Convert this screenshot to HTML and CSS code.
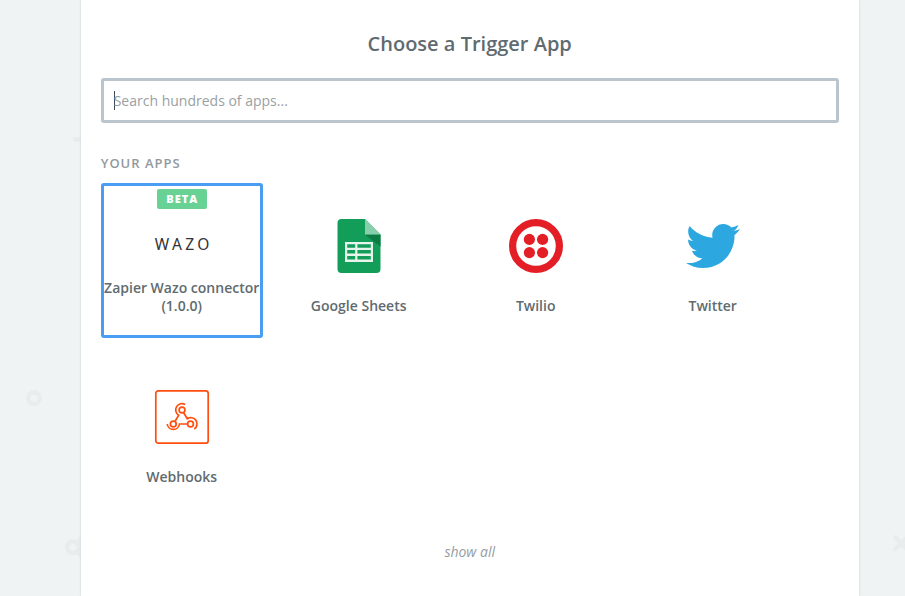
FILE: index.html
```html
<!DOCTYPE html>
<html lang="en">
<head>
<meta charset="utf-8">
<title>Choose a Trigger App</title>
<link rel="stylesheet" href="styles.css">
</head>
<body>
<svg class="backdrop" width="905" height="596" viewBox="0 0 905 596" aria-hidden="true">
  <circle cx="34" cy="398.3" r="5.8"/>
  <circle cx="73" cy="547.3" r="5.8"/>
  <path d="M75.500 139.500H84M77 543L85 535M77 552L85 560M895.500 537.500L910 552M895.500 549L910 534.500"/>
</svg>
<main class="panel">
  <h1 class="title">Choose a Trigger App</h1>
  <div class="search"><span class="caret"></span><input class="search-input" type="text" placeholder="Search hundreds of apps..."></div>
  <h2 class="section">Your Apps</h2>
  <div class="apps">
    <div class="app selected">
      <span class="badge">BETA</span>
      <span class="icon wazo">WAZO</span>
      <span class="name">Zapier Wazo connector (1.0.0)</span>
    </div>
    <div class="app">
      <svg class="icon" viewBox="0 0 54 54">
        <path fill="#129e58" d="M9.500 0H33L48.500 15.500V50a4 4 0 0 1-4 4h-35a4 4 0 0 1-4-4V4a4 4 0 0 1 4-4Z"/>
        <path fill="#0c7a43" d="M33 15.500h15.500V27.500L34 16.500Z"/>
        <path fill="#87ceac" d="M33 0L48.500 15.500H33Z"/>
        <path fill="#e6f4ec" fill-rule="evenodd" d="M13 23h28v20H13ZM15.200 25.200v3.600h8v-3.600ZM25.400 25.200v3.600h13.400v-3.600ZM15.200 31v3.600h8V31ZM25.400 31v3.600h13.400V31ZM15.200 37v3.600h8V37ZM25.400 37v3.600h13.400V37Z"/>
      </svg>
      <span class="name">Google Sheets</span>
    </div>
    <div class="app">
      <svg class="icon" viewBox="0 0 54 54" fill="#e31e26">
        <circle cx="27" cy="27" r="23.400" fill="none" stroke="#e31e26" stroke-width="7.200"/>
        <circle cx="20.400" cy="20.400" r="5.600"/><circle cx="33.600" cy="20.400" r="5.600"/>
        <circle cx="20.400" cy="33.600" r="5.600"/><circle cx="33.600" cy="33.600" r="5.600"/>
      </svg>
      <span class="name">Twilio</span>
    </div>
    <div class="app">
      <svg class="icon" viewBox="0 0 24 24"><path fill="#2ca7e0" d="M23.954 4.569c-.885.389-1.830.654-2.825.775 1.014-.611 1.794-1.574 2.163-2.723-.951.555-2.005.959-3.127 1.184-.896-.959-2.173-1.559-3.591-1.559-2.717 0-4.920 2.203-4.920 4.917 0 .390.045.765.127 1.124C7.691 8.094 4.066 6.130 1.640 3.161c-.427.722-.666 1.561-.666 2.475 0 1.710.870 3.213 2.188 4.096-.807-.026-1.566-.248-2.228-.616v.061c0 2.385 1.693 4.374 3.946 4.827-.413.111-.849.171-1.296.171-.314 0-.615-.030-.916-.086.631 1.953 2.445 3.377 4.604 3.417-1.680 1.319-3.809 2.105-6.102 2.105-.390 0-.779-.023-1.170-.067 2.189 1.394 4.768 2.209 7.557 2.209 9.054 0 13.999-7.496 13.999-13.986 0-.209 0-.420-.015-.630.961-.689 1.800-1.560 2.460-2.548z"/></svg>
      <span class="name">Twitter</span>
    </div>
    <div class="app">
      <svg class="icon" viewBox="0 0 54 54" fill="none" stroke="#ff4f0f" stroke-width="1.700">
        <rect x=".8" y=".8" width="52.400" height="52.400" rx="2.500"/>
        <circle cx="27" cy="20" r="2.900"/><circle cx="18.300" cy="34" r="2.900"/><circle cx="35.500" cy="34" r="2.900"/>
        <path d="M30.200 14.500A6.200 6.200 0 0 0 23.700 25.200L19.900 31.500M12.200 34A6.200 6.200 0 0 0 24.500 34H32.600M39.300 39A6.200 6.200 0 0 0 32.300 28.700L28.500 22.500"/>
      </svg>
      <span class="name">Webhooks</span>
    </div>
  </div>
  <a class="more">show all</a>
</main>
</body>
</html>
```
FILE: styles.css
```css
* { box-sizing: border-box; }
body {
  margin: 0;
  height: 596px;
  overflow: hidden;
  background: #eff3f4;
  color: #5f6b70;
  font-family: "Open Sans", sans-serif;
}
.backdrop {
  position: absolute;
  left: 0;
  top: 0;
  fill: none;
  stroke: #e8eced;
  stroke-width: 4.500;
  stroke-linecap: round;
}
.panel {
  position: relative;
  width: 778px;
  height: 596px;
  margin-left: 80.700px;
  padding: 30px 20px 0;
  background: #fff;
  box-shadow: 0 0 2px #c3ccd2;
  display: flex;
  flex-direction: column;
}
.title {
  margin: 0;
  text-align: center;
  font-size: 20px;
  line-height: 28px;
  font-weight: 600;
}
.search {
  display: flex;
  align-items: center;
  height: 45px;
  margin-top: 20px;
  padding: 0 10px;
  border: 3px solid #bbc5cd;
  border-radius: 3px;
}
.caret {
  width: 1px;
  height: 19px;
  margin-right: -1px;
  background: #3f4c52;
}
.search-input {
  flex: 1;
  padding: 0;
  border: 0;
  outline: 0;
  background: transparent;
  font: 14px/20px "Open Sans", sans-serif;
}
.search-input::placeholder { color: #999fa3; opacity: 1; }
.section {
  margin: 30px 0 10px;
  color: #92999e;
  font-size: 13px;
  line-height: 20px;
  font-weight: 600;
  letter-spacing: 1px;
  text-transform: uppercase;
}
.apps {
  display: grid;
  grid-template-columns: repeat(4, 162px);
  grid-auto-rows: 155px;
  gap: 16px 15px;
}
.app {
  display: flex;
  flex-direction: column;
  align-items: center;
  padding-top: 33px;
  border: 3px solid transparent;
  border-radius: 3px;
}
.selected { padding-top: 3px; border-color: #499df3; }
.badge {
  height: 20px;
  margin-bottom: 8px;
  padding: 0 8.500px 0 9.500px;
  border-radius: 2px;
  background: #67d294;
  color: #fff;
  font-size: 11px;
  line-height: 20px;
  font-weight: 800;
  letter-spacing: 1px;
}
.icon { width: 54px; height: 54px; flex: none; overflow: visible; }
.wazo {
  display: flex;
  align-items: center;
  justify-content: center;
  padding-left: 4px;
  color: #333;
  font-family: "Noto Sans", sans-serif;
  font-size: 15.500px;
  letter-spacing: 3.300px;
}
.name {
  margin-top: 24px;
  text-align: center;
  font-size: 14px;
  line-height: 18px;
  font-weight: 600;
}
.selected .name { margin-top: 8px; }
.more {
  margin-top: 33px;
  text-align: center;
  color: #959ea3;
  font-size: 14px;
  line-height: 20px;
  font-style: italic;
}
```
